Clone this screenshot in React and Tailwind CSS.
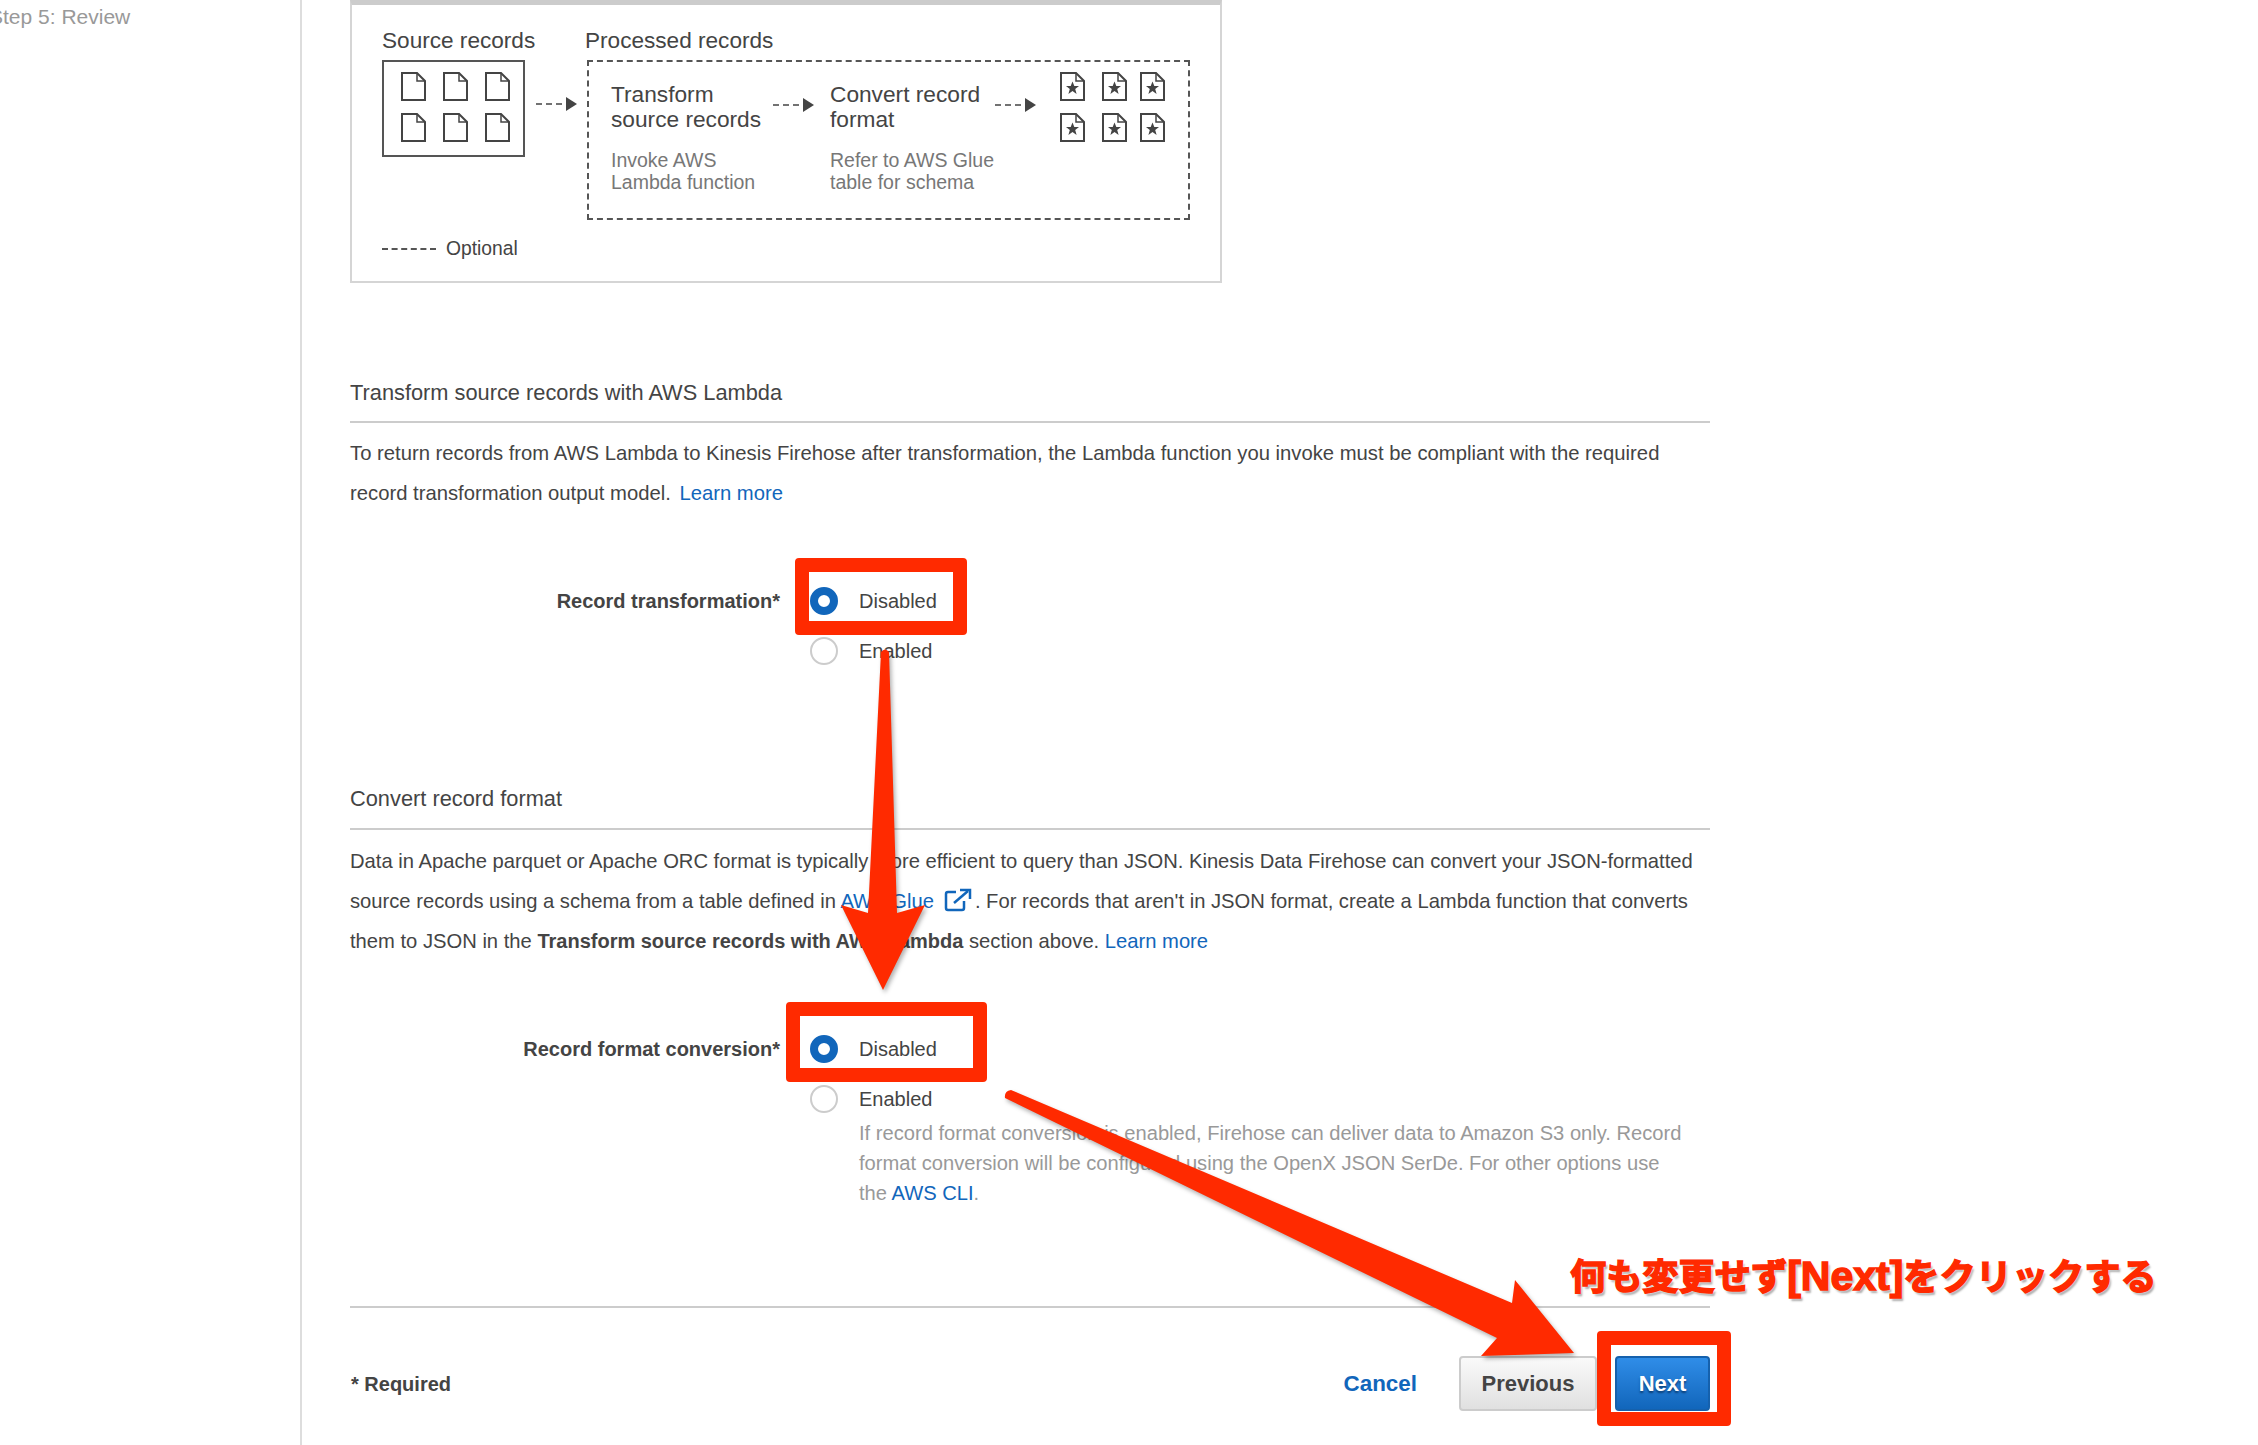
const sans = { fontFamily: '"Liberation Sans", Arial, sans-serif' };

function Doc({ star, className }) {
  return (
    <svg width="25" height="29" viewBox="0 0 25 29" fill="none" stroke="#444" strokeWidth="2" className={className}>
      <path d="M1 1H16L24 9V28H1Z" />
      <path d="M16 1V9H24" strokeWidth="1.5" />
      {star && <path d="M12.5 9.5L14.3 14H19L15.2 17L16.6 22L12.5 19L8.4 22L9.8 17L6 14H10.7Z" fill="#444" stroke="none" />}
    </svg>
  );
}

function DocGrid({ star }) {
  return (
    <div className="flex flex-col gap-[12px]">
      {[0, 1].map((row) => (
        <div key={row} className="flex">
          <Doc star={star} />
          <Doc star={star} className="ml-[17px]" />
          <Doc star={star} className={star ? 'ml-[13px]' : 'ml-[17px]'} />
        </div>
      ))}
    </div>
  );
}

function FlowArrow() {
  return (
    <svg width="41" height="14" viewBox="0 0 41 14" className="shrink-0">
      <line x1="0" y1="7" x2="30" y2="7" stroke="#444" strokeWidth="1.5" strokeDasharray="6 4" />
      <path d="M30 0L41 7L30 14Z" fill="#444" />
    </svg>
  );
}

function Radio({ checked, label }) {
  return (
    <div className="flex items-center h-[28px]">
      {checked ? (
        <span className="w-[28px] h-[28px] rounded-full border-[8px] border-[#1166bb] bg-white shrink-0"></span>
      ) : (
        <span className="w-[28px] h-[28px] rounded-full border-2 border-[#cccccc] bg-white shrink-0"></span>
      )}
      <span className="ml-[21px] text-[20px] text-[#444444]">{label}</span>
    </div>
  );
}

function Diagram() {
  return (
    <div className="w-[872px] h-[283px] border-2 border-t-[5px] border-[#d5d5d5] border-t-[#cccccc] pl-[30px] pt-[22px] text-[#444444]">
      <div className="flex">
        <div className="w-[205px] shrink-0">
          <div className="text-[22.6px] leading-[28px] h-[33px]">Source records</div>
          <div className="w-[143px] h-[97px] border-2 border-[#555555] pl-[17px] pt-[10px]">
            <DocGrid />
          </div>
        </div>
        <div className="flex-1">
          <div className="text-[22.6px] leading-[28px] h-[33px] ml-[-2px]">Processed records</div>
          <div className="relative w-[603px] h-[160px] border-2 border-dashed border-[#555555] pl-[22px] pt-[10px] flex">
            <div className="absolute left-[-53px] top-[35px]"><FlowArrow /></div>
            <div className="w-[162px] shrink-0">
              <div className="text-[22.7px] leading-[25px] pt-[10px] whitespace-nowrap">Transform<br />source records</div>
              <div className="text-[19.5px] leading-[22px] text-[#777777] mt-[17px] whitespace-nowrap">Invoke AWS<br />Lambda function</div>
            </div>
            <div className="pt-[26px]"><FlowArrow /></div>
            <div className="w-[165px] shrink-0 ml-[16px]">
              <div className="text-[22.7px] leading-[25px] pt-[10px] whitespace-nowrap">Convert record<br />format</div>
              <div className="text-[19.5px] leading-[22px] text-[#777777] mt-[17px] whitespace-nowrap">Refer to AWS Glue<br />table for schema</div>
            </div>
            <div className="pt-[26px]"><FlowArrow /></div>
            <div className="ml-[24px]"><DocGrid star /></div>
          </div>
        </div>
      </div>
      <div className="flex items-center mt-[15px] h-[28px]">
        <span className="w-[54px] border-t-2 border-dashed border-[#555555]"></span>
        <span className="ml-[10px] text-[19.3px]">Optional</span>
      </div>
    </div>
  );
}

export default function App() {
  return (
    <div className="relative flex w-[2258px] h-[1445px] overflow-hidden bg-white" style={sans}>
      <aside className="w-[302px] h-full shrink-0 border-r-2 border-[#dddddd] pt-[3px] overflow-hidden">
        <div className="ml-[-11px] text-[21px] leading-[28px] text-[#999999]">Step 5: Review</div>
      </aside>

      <main className="w-[1408px] pl-[48px] shrink-0 text-[#444444]">
        <Diagram />

        <h3 className="mt-[96px] text-[21.8px] leading-[28px] pb-[14px] border-b-2 border-[#cccccc] text-[#444444]">
          Transform source records with AWS Lambda
        </h3>
        <p className="mt-[10px] text-[20.25px] leading-[40px]">
          To return records from AWS Lambda to Kinesis Firehose after transformation, the Lambda function you invoke must be compliant with the required<br />
          record transformation output model. <a className="text-[#1166bb] ml-[3px]">Learn more</a>
        </p>

        <div className="flex mt-[74px]">
          <label className="w-[430px] text-right text-[20px] font-bold leading-[28px]">Record transformation*</label>
          <div className="ml-[30px] flex flex-col gap-[22px]">
            <Radio checked label="Disabled" />
            <Radio label="Enabled" />
          </div>
        </div>

        <h3 className="mt-[120px] text-[21.8px] leading-[28px] pb-[15px] border-b-2 border-[#cccccc] text-[#444444]">
          Convert record format
        </h3>
        <p className="mt-[11px] text-[20.2px] leading-[40px]">
          Data in Apache parquet or Apache ORC format is typically more efficient to query than JSON. Kinesis Data Firehose can convert your JSON-formatted<br />
          source records using a schema from a table defined in <a className="text-[#1166bb]">AWS Glue</a>
          <svg width="28" height="24" viewBox="0 0 28 24" fill="none" stroke="#1166bb" strokeWidth="2.5" className="inline-block ml-[10px] mr-[3px] align-[-4px]">
            <path d="M12 4H4Q2 4 2 6V20Q2 22 4 22H18Q20 22 20 20V13" />
            <path d="M10 15L24 3" />
            <path d="M16 2H26V11" />
          </svg>
          . For records that aren't in JSON format, create a Lambda function that converts<br />
          them to JSON in the <b className="text-[20px]">Transform source records with AWS Lambda</b> section above. <a className="text-[#1166bb]">Learn more</a>
        </p>

        <div className="flex mt-[74px]">
          <label className="w-[430px] text-right text-[20px] font-bold leading-[28px]">Record format conversion*</label>
          <div className="ml-[30px]">
            <Radio checked label="Disabled" />
            <div className="mt-[22px]"><Radio label="Enabled" /></div>
            <p className="mt-[5px] ml-[49px] w-[830px] text-[20.15px] leading-[30px] text-[#999999] whitespace-nowrap">
              If record format conversion is enabled, Firehose can deliver data to Amazon S3 only. Record<br />
              format conversion will be configured using the OpenX JSON SerDe. For other options use<br />
              the <a className="text-[#1166bb]">AWS CLI</a>.
            </p>
          </div>
        </div>

        <div className="mt-[98px] border-t-2 border-[#cccccc] pt-[48px] flex items-center">
          <span className="text-[20px] font-bold ml-[1px]">* Required</span>
          <div className="ml-auto flex items-center">
            <a className="text-[22.4px] font-bold text-[#1166bb] mr-[42px]">Cancel</a>
            <button className="w-[138px] h-[55px] rounded-[4px] border-2 border-[#cccccc] bg-gradient-to-b from-[#fafafa] to-[#e0e0e0] text-[22px] font-bold text-[#444444]">Previous</button>
            <button className="ml-[18px] w-[95px] h-[55px] rounded-[4px] border-2 border-[#1561ad] bg-gradient-to-b from-[#2f8de8] to-[#1166bb] text-[22px] font-bold text-white [text-shadow:0_2px_2px_#0b3f78]">Next</button>
          </div>
        </div>
      </main>

      {/* screenshot annotations */}
      <div className="absolute left-[795px] top-[558px] w-[172px] h-[77px] border-[14px] border-[#ff2a00] rounded-[4px]"></div>
      <div className="absolute left-[786px] top-[1002px] w-[201px] h-[80px] border-[14px] border-[#ff2a00] rounded-[4px]"></div>
      <div className="absolute left-[1597px] top-[1331px] w-[134px] h-[95px] border-[14px] border-[#ff2a00] rounded-[4px]"></div>
      <svg width="2258" height="1445" viewBox="0 0 2258 1445" className="absolute left-0 top-0 pointer-events-none drop-shadow-[2px_3px_2px_rgba(0,0,0,0.3)]">
        <path d="M881 652Q885 647 889 652L897 913L925 905L883 990L841 905L868 913Z" fill="#ff2a00" />
        <path d="M1005 1098Q1004 1091 1011 1090L1512 1303L1515 1280L1574 1353L1481 1356L1497 1338Z" fill="#ff2a00" />
      </svg>
      <div
        className="absolute left-[1570px] top-[1251px] text-[36.2px] leading-[50px] font-bold text-[#ff2a00] whitespace-nowrap [-webkit-text-stroke:1.5px_#ff2a00] [text-shadow:0_0_3px_#fff,0_0_3px_#fff,2px_3px_2px_#aaa]"
        style={{ fontFamily: '"Liberation Sans", "Noto Sans CJK JP", sans-serif' }}
      >
        何も変更せず<span className="text-[41px]">[Next]</span>をクリックする
      </div>
    </div>
  );
}
